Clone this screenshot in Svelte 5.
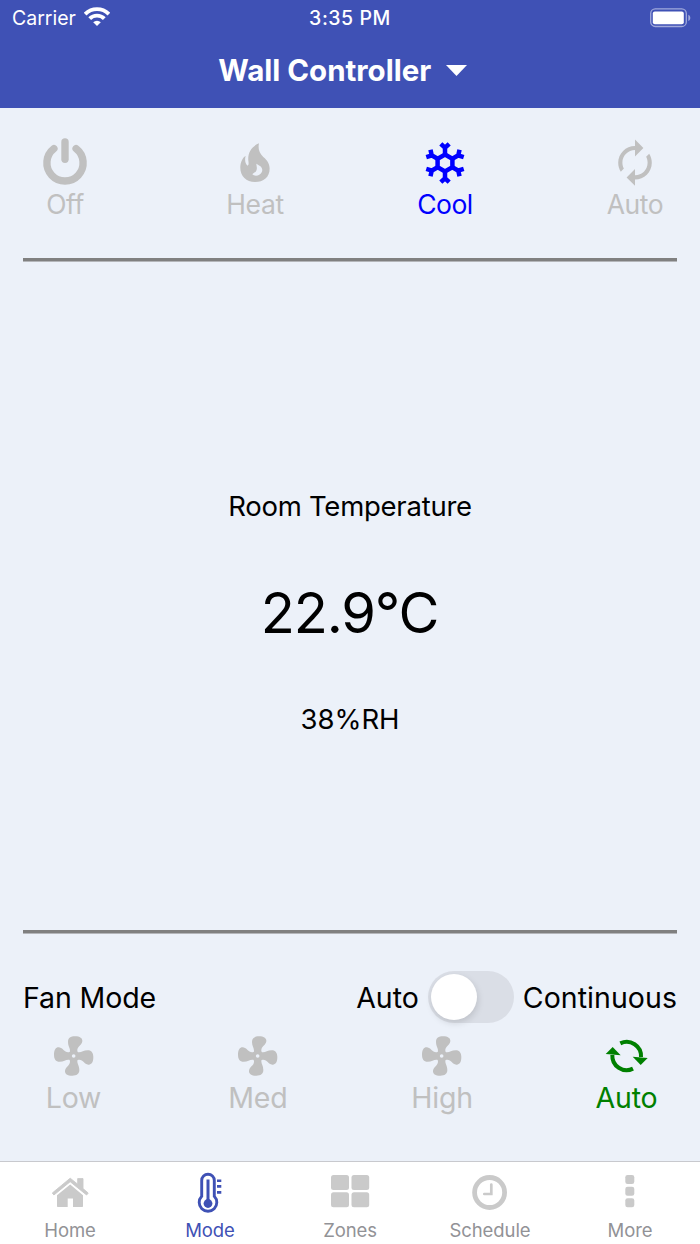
<script>
  const modes = [
    { id: 'off', label: 'Off', ls: -0.4 },
    { id: 'heat', label: 'Heat', ls: -0.4 },
    { id: 'cool', label: 'Cool', ls: -0.5 },
    { id: 'auto', label: 'Auto', ls: -0.4 }
  ];
  const fans = ['Low', 'Med', 'High', 'Auto'];
  const tabs = ['Home', 'Mode', 'Zones', 'Schedule', 'More'];
  let mode = $state('cool');
  let fan = $state('Auto');
  let tab = $state('Mode');
  let continuous = $state(false);
</script>

<div class="screen">
  <header>
    <div class="status">
      <div class="carrier">
        <span>Carrier</span>
        <svg width="26" height="20" viewBox="0 0 26 20">
          <g fill="none" stroke="#fff" stroke-width="3.9">
            <path d="M1.1 7.1A16.8 16.8 0 0 1 24.9 7.1" />
            <path d="M5.7 11.7A10.3 10.3 0 0 1 20.3 11.7" />
          </g>
          <path d="M13 19L9.2 15.2A5.4 5.4 0 0 1 16.8 15.2Z" fill="#fff" />
        </svg>
      </div>
      <div class="time">3:35 PM</div>
      <div class="battery">
        <svg width="42" height="20" viewBox="0 0 42 20">
          <rect x=".7" y=".9" width="35.6" height="17.6" rx="4.6" fill="none" stroke="#a0a9db" stroke-width="1.3" />
          <rect x="2.8" y="3.5" width="31" height="12.7" rx="2" fill="#fff" />
          <path d="M38.3 6.7C41 8 41 11.7 38.3 13Z" fill="#a0a9db" />
        </svg>
      </div>
    </div>
    <div class="title">
      <h1>Wall Controller</h1>
      <svg width="21" height="11" viewBox="0 0 21 11"><path d="M0 0H21L10.5 11Z" fill="#fff" /></svg>
    </div>
  </header>

  <main>
    <section class="modes">
      {#each modes as m}
        <button class="mode" class:active={mode === m.id} onclick={() => (mode = m.id)}>
          <svg width="50" height="50" viewBox="-25 -25 50 50">
            {#if m.id === 'off'}
              <g fill="none" stroke="currentColor" stroke-width="7.4" stroke-linecap="round">
                <path d="M-11.1 -14.4A18.1 18.1 0 1 0 11.1 -14.4" />
                <path d="M0 -21.1V-3.7" />
              </g>
            {:else if m.id === 'heat'}
              <path
                transform="translate(-234.7 -43) scale(.33333)"
                fill="currentColor"
                fill-rule="evenodd"
                d="M716 70C713 86 716 98 729 111C742 122 748 132 748 146C748 171 730 186 704 186C678 186 660 168 660 143C660 127 666 114 676 107C673 118 674 131 682 137C686 135 685 129 684 121C682 97 695 79 716 70ZM708 131C708 137 712 144 708 152C706 157 699 159 696 163C701 168 711 168 717 164C726 159 728 150 724 143C720 136 713 135 708 131Z"
              />
            {:else if m.id === 'cool'}
              <g fill="none" stroke="currentColor" stroke-width="4.5">
                <path d="M0 -8.5L7.4 -4.25V4.25L0 8.5L-7.4 4.25V-4.25Z" />
                {#each [0, 60, 120, 180, 240, 300] as angle}
                  <path transform="rotate({angle})" d="M0 -8.5V-16.5M-4.2 -19.2L0 -15.3L4.2 -19.2" />
                {/each}
              </g>
            {:else}
              <path
                transform="translate(0 -.3) scale(2.1) translate(-12 -12)"
                fill="currentColor"
                d="M12 6v3l4-4-4-4v3c-4.42 0-8 3.58-8 8 0 1.57.46 3.03 1.24 4.26L6.7 14.8c-.45-.83-.7-1.79-.7-2.8 0-3.31 2.69-6 6-6zm6.76 1.74L17.3 9.2c.44.84.7 1.79.7 2.8 0 3.31-2.69 6-6 6v-3l-4 4 4 4v-3c4.42 0 8-3.58 8-8 0-1.57-.46-3.03-1.24-4.26z"
              />
            {/if}
          </svg>
          <span style="letter-spacing: {m.ls}px">{m.label}</span>
        </button>
      {/each}
    </section>
    <div class="rule"></div>

    <section class="readings">
      <div class="room">Room Temperature</div>
      <div class="temp">22.9°C</div>
      <div class="humidity">38%RH</div>
    </section>
    <div class="rule"></div>

    <section class="fan-row">
      <span class="fan-title">Fan Mode</span>
      <span class="state">Auto</span>
      <button class="switch" class:on={continuous} aria-label="Continuous" onclick={() => (continuous = !continuous)}><i></i></button>
      <span class="cont">Continuous</span>
    </section>

    <section class="fans">
      {#each fans as f}
        <button class="fan" class:active={fan === f} onclick={() => (fan = f)}>
          <svg width="44" height="42" viewBox="-66 -63 132 126">
            {#if f === 'Auto'}
              <g fill="currentColor" transform="translate(2 0)">
                {#each [0, 180] as angle}
                  <g transform="rotate({angle})">
                    <path d="M-19 -38A43 43 0 0 1 43 3" fill="none" stroke="currentColor" stroke-width="12" />
                    <path d="M18 2L63 6L42 27Z" />
                  </g>
                {/each}
              </g>
            {:else}
              <g fill="currentColor" transform="translate(-1 0)">
                {#each [0, 90, 180, 270] as angle}
                  <path
                    transform="rotate({angle})"
                    d="M-12 -10C-8 -22 -17 -27 -17 -42C-17 -54 -9 -59 4 -59C19 -59 27 -53 26 -44C24 -31 10 -29 11 -15L13 -10Z"
                  />
                {/each}
                <circle r="10.5" fill="none" stroke="currentColor" stroke-width="10" />
              </g>
            {/if}
          </svg>
          <span>{f}</span>
        </button>
      {/each}
    </section>
  </main>

  <nav>
    {#each tabs as t}
      <button class="tab" class:active={tab === t} onclick={() => (tab = t)}>
        <svg width="44" height="44" viewBox="0 0 44 44">
          {#if t === 'Home'}
            <g fill="currentColor">
              <path d="M9 25.3L22.2 14.6L35 25.3V36.3Q35 37 34.3 37H25V28.4H19.7V37H9.7Q9 37 9 36.3Z" />
              <path d="M22.2 8.2L29.7 14.2V8.6H35V18.6L40.2 23L38.6 25L22.2 11.7L5.9 25L4.3 23Z" stroke="currentColor" stroke-width=".9" stroke-linejoin="round" />
            </g>
          {:else if t === 'Mode'}
            <g fill="none" stroke="currentColor" transform="translate(0 1)">
              <path d="M13.7 25.3V9.5A6.3 6.3 0 0 1 26.3 9.5V25.3A8.8 8.8 0 1 1 13.7 25.3Z" stroke-width="2.9" />
              <path d="M20 8.5V32" stroke-width="3" />
              <path d="M29 9.8H33.3M29 15.4H33.3M29 21.4H33.3" stroke-width="2.6" />
            </g>
            <circle cx="20" cy="33.5" r="4.4" fill="currentColor" />
          {:else if t === 'Zones'}
            <g fill="currentColor">
              <rect x="3" y="5" width="18" height="15" rx="2.5" />
              <rect x="23.5" y="5" width="17.7" height="15" rx="2.5" />
              <rect x="3" y="22.3" width="18" height="15" rx="2.5" />
              <rect x="23.5" y="22.3" width="17.7" height="15" rx="2.5" />
            </g>
          {:else if t === 'Schedule'}
            <g fill="none" stroke="currentColor">
              <circle cx="21.6" cy="22.5" r="15" stroke-width="4.8" />
              <path d="M23.3 14.6V24H16.3" stroke-width="2.7" stroke-linecap="round" />
            </g>
          {:else}
            <g fill="currentColor">
              <rect x="17.3" y="5" width="9" height="9" rx="2.3" />
              <rect x="17.3" y="16.7" width="9" height="9" rx="2.3" />
              <rect x="17.3" y="28.3" width="9" height="9" rx="2.3" />
            </g>
          {/if}
        </svg>
        <span>{t}</span>
      </button>
    {/each}
  </nav>
</div>

<style>
  :global(body) { margin: 0; }
  .screen {
    width: 700px;
    height: 1244px;
    display: flex;
    flex-direction: column;
    overflow: hidden;
    background: #ecf1f9;
    color: #000;
    font-family: Inter, "Liberation Sans", sans-serif;
  }
  button { border: 0; padding: 0; margin: 0; background: none; font: inherit; color: inherit; }
  svg { display: block; flex: none; }
  span, .time, .room, .temp, .humidity, h1 { white-space: nowrap; }
  header { height: 107.5px; flex: none; background: #3f51b5; color: #fff; }
  .status {
    height: 36px;
    display: grid;
    grid-template-columns: 1fr auto 1fr;
    align-items: center;
    padding: 0 8px 0 8px;
    font-size: 19.5px;
  }
  .carrier { display: flex; align-items: center; gap: 8px; padding-left: 4px; }
  .carrier svg { margin-top: -3px; }
  .time { font-weight: 500; letter-spacing: .55px; }
  .battery { display: flex; justify-content: flex-end; }
  .title {
    height: 69px;
    display: flex;
    align-items: center;
    justify-content: center;
    gap: 15px;
    padding-right: 14.5px;
  }
  h1 { margin: 0; font-size: 29.5px; line-height: 36px; padding-bottom: 2px; font-weight: 700; letter-spacing: 0; }
  main { flex: 1; padding: 0 23px; display: flex; flex-direction: column; }
  .rule { height: 3px; flex: none; background: #808080; border-bottom: 1px solid #b4b6ba; }
  .modes { height: 150.5px; flex: none; display: flex; justify-content: space-between; }
  .mode {
    width: 84px;
    display: flex;
    flex-direction: column;
    align-items: center;
    padding-top: 30px;
    color: #c0c0c0;
    font-size: 26.5px;
  }
  .mode span { line-height: 34px; margin-top: -1px; }
  .mode.active { color: #00f; }
  .readings {
    height: 668px;
    flex: none;
    display: flex;
    flex-direction: column;
    align-items: center;
  }
  .room { margin-top: 223.5px; line-height: 40px; font-size: 27.5px; letter-spacing: -.25px; }
  .temp { margin-top: 47px; line-height: 80px; font-size: 56px; letter-spacing: -1.2px; padding-right: 1px; }
  .humidity { margin-top: 46.5px; line-height: 40px; font-size: 27.5px; }
  .fan-row { margin-top: 36.5px; height: 53px; flex: none; display: flex; align-items: center; font-size: 28.5px; }
  .state { margin-left: auto; }
  .fan-title { letter-spacing: -.1px; }
  .switch {
    width: 86px;
    height: 52.5px;
    border-radius: 27px;
    background: #dadee6;
    margin: 0 9px;
    padding: 3.3px;
    display: flex;
  }
  .switch i { width: 46px; height: 46px; border-radius: 50%; background: #fff; box-shadow: 1px 3px 7px rgba(0, 0, 0, .13); }
  .switch.on { justify-content: flex-end; }
  .cont { letter-spacing: .05px; }
  .fans { margin-top: 11px; display: flex; justify-content: space-between; }
  .fan {
    width: 101px;
    display: flex;
    flex-direction: column;
    align-items: center;
    color: #c0c0c0;
    font-size: 28.5px;
    letter-spacing: -.2px;
  }
  .fan span { margin-top: 1.2px; line-height: 40px; }
  .fan.active { color: #008000; }
  nav {
    height: 82px;
    flex: none;
    display: grid;
    grid-template-columns: repeat(5, 1fr);
    border-top: 1px solid #c8c9ce;
    background: #fff;
  }
  .tab { display: flex; flex-direction: column; align-items: center; padding-top: 8px; color: #929296; font-size: 18.5px; letter-spacing: -.1px; }
  .tab svg { color: #cacaca; }
  .tab span { margin-top: 5px; line-height: 22px; }
  .tab.active, .tab.active svg { color: #3f51b5; }
</style>
